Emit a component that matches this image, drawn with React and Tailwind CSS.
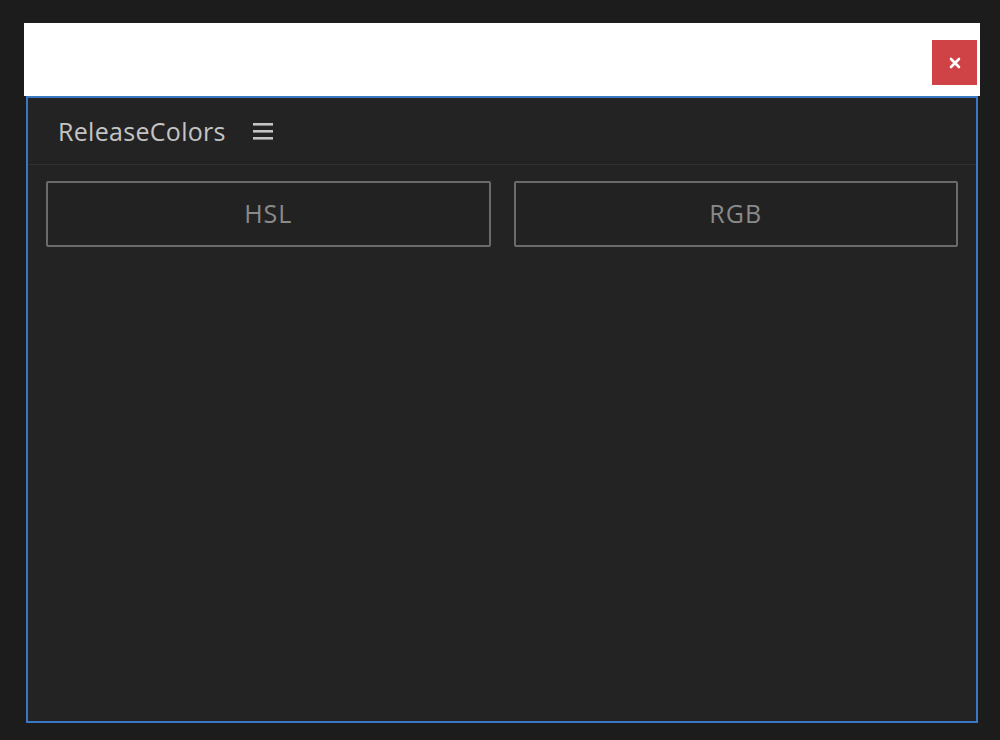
import React from 'react';

const App = () => {
  return (
    <div className="w-[1000px] h-[740px] bg-[#1c1c1c] pt-[23px] pl-[24px] overflow-hidden" style={{ fontFamily: '"Open Sans", "Noto Sans", sans-serif' }}>
      {/* Title bar */}
      <div className="w-[956px] h-[73px] bg-white flex justify-end items-start">
        <button className="mt-[17px] mr-[3px] w-[45px] h-[45px] bg-[#cf4346] flex items-center justify-center">
          <svg width="12" height="12" viewBox="0 0 12 12">
            <path d="M2 2 L10 10 M10 2 L2 10" stroke="#ffffff" strokeWidth="2.6" strokeLinecap="round" />
          </svg>
        </button>
      </div>

      {/* Panel */}
      <div className="ml-[2px] w-[952px] h-[627px] border-2 border-[#3a78c4] bg-[#232323] flex flex-col">
        <div className="h-[67px] flex items-center pl-[30px] gap-[26px] border-b border-[#2f2f2f]">
          <span className="text-[25px] font-medium text-[#c4c4c4] tracking-[0.3px] leading-none">ReleaseColors</span>
          <svg width="22" height="18" viewBox="0 0 22 18">
            <rect x="1" y="1" width="20" height="2.6" fill="#c4c4c4" />
            <rect x="1" y="8" width="20" height="2.6" fill="#c4c4c4" />
            <rect x="1" y="15" width="20" height="2.6" fill="#c4c4c4" />
          </svg>
        </div>

        <div className="flex gap-[23px] px-[18px] pt-[16px]">
          <button className="flex-1 h-[66px] border-2 border-[#6b6b6b] rounded-[2px] text-[25px] font-medium tracking-[1px] text-[#8a8a8a] bg-[#222222]">
            HSL
          </button>
          <button className="flex-1 h-[66px] border-2 border-[#6b6b6b] rounded-[2px] text-[25px] font-medium tracking-[1px] text-[#8a8a8a] bg-[#222222]">
            RGB
          </button>
        </div>
      </div>
    </div>
  );
};

export default App;
